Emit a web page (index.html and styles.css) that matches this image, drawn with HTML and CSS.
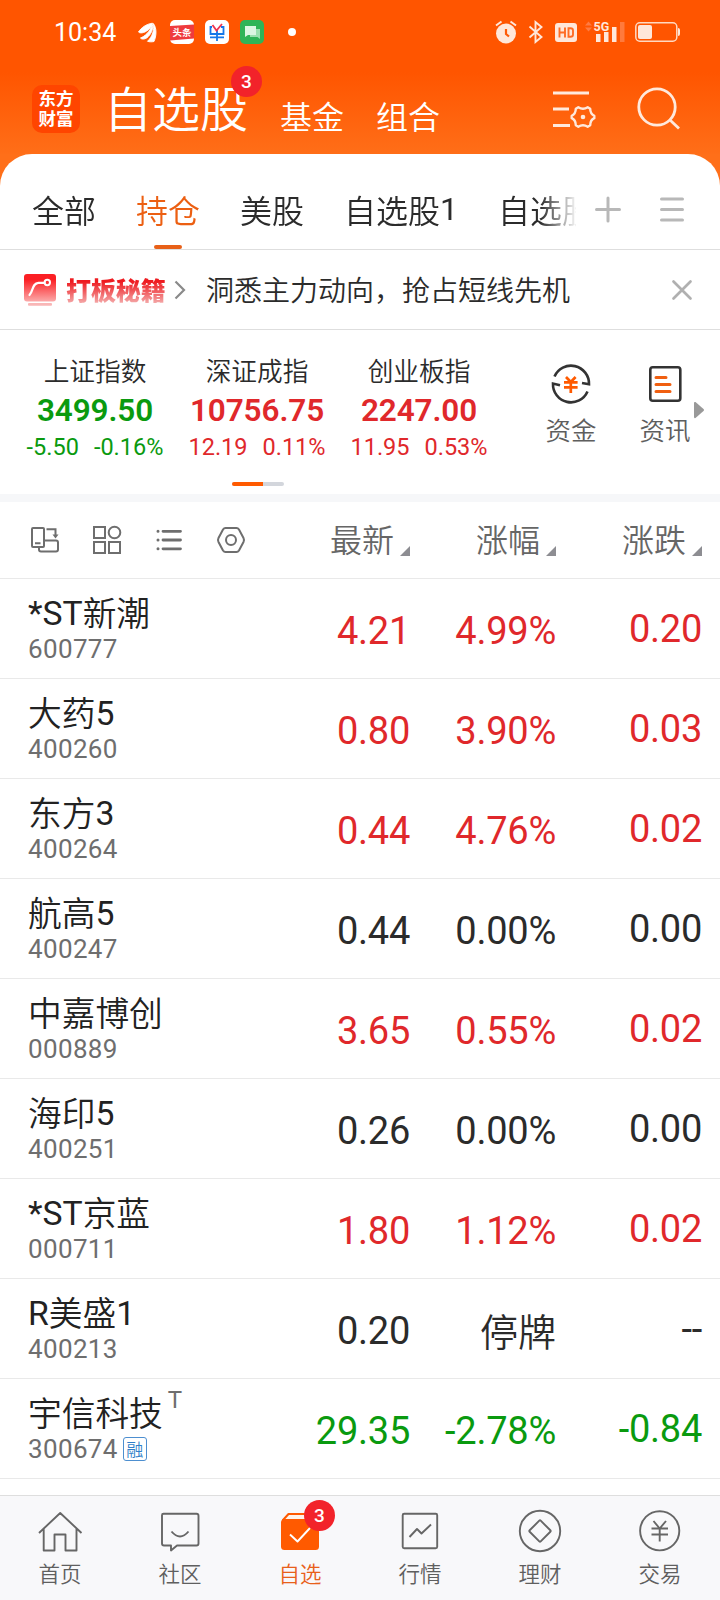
FILE: index.html
```html
<!DOCTYPE html>
<html lang="zh-CN">
<head>
<meta charset="utf-8">
<title>自选股</title>
<link rel="stylesheet" href="styles.css">
</head>
<body>
<div class="app">
  <header class="header">
    <div class="status">
      <span class="clock">10:34</span>
      <svg class="st-notes" width="176" height="28" viewBox="134 18 176 28">
        <path d="M138.500 32C141 28 146 24 152.500 23.200C151.500 27.500 148 31 143.500 32.500C141.500 33.200 139.500 33 138.500 32ZM140.500 38C144.500 36.500 150 32 152.300 24.500C153.800 29 150.500 35 147 37.800C144.500 39.500 141.500 39.500 140.500 38ZM147.500 41.300C152.500 36.500 154.500 30 153.300 23.500C157 28 156.500 36 154 41.500C152 42 149.500 42 147.500 41.300Z" fill="#fff" stroke="#fff" stroke-width=".9"/>
        <rect x="170" y="20" width="24" height="24" rx="5" fill="#fff"/>
        <path d="M170 26L194 24.500V38.500L170 40.500Z" fill="#ef3b3e"/>
        <text class="news-mark" x="182" y="36.300" text-anchor="middle">头条</text>
        <rect x="205" y="20" width="24" height="24" rx="5" fill="#fff"/>
        <path d="M212 27H210.500V34H223.500V27H221M210 37.300H224M217 30V41" fill="none" stroke="#1677e8" stroke-width="1.800"/>
        <path d="M212.500 25L216.500 30.500L222 24" fill="none" stroke="#ee3350" stroke-width="1.800"/>
        <rect x="240" y="20" width="24" height="24" rx="5" fill="#2fb457"/>
        <path d="M250 29H260V39L257.500 37H250Z" fill="#9be0ae"/>
        <path d="M245 26H256V35H248L245 37Z" fill="#dcf6e2"/>
        <circle cx="292" cy="32" r="4" fill="#fff"/>
      </svg>
      <svg class="st-system" width="190" height="28" viewBox="494 18 190 28">
        <g fill="#ffe7da">
          <circle cx="506" cy="33.500" r="10"/>
          <path d="M506 29V34L509 36.500" fill="none" stroke="#ff5a08" stroke-width="2.200"/>
          <path d="M496 25.500L501.500 21.500M510.500 21.500L516 25.500" stroke="#ffe7da" stroke-width="2"/>
          <path d="M529.500 26.500L541.500 37L535.500 42V22L541.500 27L529.500 37.500" fill="none" stroke="#ffe7da" stroke-width="1.900"/>
          <rect x="555" y="23" width="22" height="19" rx="3"/>
          <path d="M559.500 27.500V37.500M565 27.500V37.500M559.500 32.500H565M568.500 28.200V36.800H570.500Q573 36.800 573 34.500V30.500Q573 28.200 570.500 28.200Z" fill="none" stroke="#ff6c25" stroke-width="1.900"/>
          <path d="M585 25.500L588.500 21.500L592 25.500ZM585 27.500L588.500 31.500L592 27.500Z" fill="#ff7b42"/>
          <text class="net-mark" x="593.500" y="31">5G</text>
          <path d="M596 34H600.500V42H596ZM604 32H608.500V42H604ZM612 27H616.500V42H612Z"/>
          <path d="M620 22H624.500V42H620Z" fill="#ff7a3d"/>
          <rect x="635.800" y="22.800" width="41" height="18.400" rx="4" fill="none" stroke="#ffd9c2" stroke-width="1.500"/>
          <rect x="638" y="25" width="14" height="14" rx="2"/>
          <path d="M678 28Q680 28 680 30V34Q680 36 678 36Z"/>
        </g>
      </svg>
    </div>
    <div class="titlebar">
      <div class="logo"><span>东方</span><span>财富</span></div>
      <h1 class="title">自选股<span class="badge badge-title">3</span></h1>
      <span class="sub">基金</span>
      <span class="sub">组合</span>
      <svg class="ico-filter" width="44" height="42" viewBox="553 88 44 42" fill="none" stroke="#ffe9dc" stroke-width="2.800">
        <path d="M554 93H590M554 109H570M554 125.500H571"/>
        <path d="M579.300 107.300Q584 110.300 588.700 107.300L591.200 108.800Q591.300 114 595.300 115.800V118.200Q591.300 120 591.200 125.200L588.700 126.700Q584 123.700 579.300 126.700L576.800 125.200Q576.700 120 572.700 118.200V115.800Q576.700 114 576.800 108.800Z" stroke-width="2.400" stroke-linejoin="round"/>
        <circle cx="584" cy="117" r="2.300" fill="#ffe9dc" stroke="none"/>
      </svg>
      <svg class="ico-search" width="44" height="44" viewBox="638 86 44 44" fill="none" stroke="#ffe9dc" stroke-width="2.800">
        <circle cx="658" cy="107" r="18.200"/><path d="M671 120L680 128.500"/>
      </svg>
    </div>
  </header>

  <main class="sheet">
    <nav class="tabs">
      <div class="tab-list">
        <span class="tab">全部</span><span class="tab tab-on">持仓</span><span class="tab">美股</span><span class="tab">自选股<span class="num">1</span></span><span class="tab">自选股</span>
      </div>
      <svg class="ico-tabs" width="92" height="28" viewBox="594 196 92 28" stroke="#b8b8b8" stroke-width="3" stroke-linecap="round">
        <path d="M596.500 209.500H619.500M608 198V221M661.500 199H682.500M661.500 209.500H682.500M661.500 220H682.500"/>
      </svg>
    </nav>

    <section class="notice">
      <svg width="32" height="33" viewBox="24 273 32 33">
        <defs><linearGradient id="tip" x1="0" y1="0" x2="0" y2="1"><stop offset="0.2" stop-color="#fb1f24"/><stop offset="1" stop-color="#fbaaaa"/></linearGradient></defs>
        <rect x="24" y="274" width="32" height="27.500" rx="3" fill="url(#tip)"/>
        <rect x="28" y="303" width="24" height="2.700" rx="1" fill="#f9b6b6"/>
        <path d="M29.500 295C33.500 291 32 283 38.500 282.800H44.500" fill="none" stroke="#fff" stroke-width="2.200" stroke-linecap="round"/>
        <circle cx="47.300" cy="282.500" r="2.700" fill="none" stroke="#fff" stroke-width="2"/>
      </svg>
      <span class="notice-tag">打板秘籍</span>
      <svg class="ico-chev" width="12" height="20" viewBox="175 280 12 20" fill="none" stroke="#8a8a8a" stroke-width="2.200"><path d="M176.500 281.500L185 290L176.500 298.500"/></svg>
      <span class="notice-text">洞悉主力动向，抢占短线先机</span>
      <svg class="ico-close" width="22" height="22" viewBox="671.500 279 22 22" stroke="#b0b0b0" stroke-width="2.700" stroke-linecap="round"><path d="M674 281.500L691 298.500M691 281.500L674 298.500"/></svg>
    </section>

    <section class="market">
      <div class="index-list">
        <div class="index down"><span class="index-name">上证指数</span><b class="index-val">3499.50</b><span class="index-chg"><span>-5.50</span><span>-0.16%</span></span></div>
        <div class="index up"><span class="index-name">深证成指</span><b class="index-val">10756.75</b><span class="index-chg"><span>12.19</span><span>0.11%</span></span></div>
        <div class="index up"><span class="index-name">创业板指</span><b class="index-val">2247.00</b><span class="index-chg"><span>11.95</span><span>0.53%</span></span></div>
        <div class="pager"><i></i></div>
      </div>
      <div class="shortcut">
        <svg width="44" height="44" viewBox="549 362 44 44" fill="none" stroke="#333" stroke-width="2.600">
          <path d="M554.500 376.500A18 18 0 0 1 589 384.200L582 383M587.500 391.500A18 18 0 0 1 553 383.600L560 385.300"/>
          <path d="M566 377L570.800 382L575.600 377M564 382.300H577.600M564 387.300H577.600M570.800 381V393" stroke="#ff5a00" stroke-width="2.700"/>
        </svg>
        <span>资金</span>
      </div>
      <div class="shortcut">
        <svg width="44" height="44" viewBox="643 362 44 44" fill="none" stroke="#333" stroke-width="2.600">
          <rect x="650.300" y="367.300" width="30" height="33.500" rx="2.500"/>
          <path d="M656 377.500H666M656 384.500H670M656 391.500H670" stroke="#f05f10" stroke-width="3" stroke-linecap="round"/>
        </svg>
        <span>资讯</span>
      </div>
      <svg class="ico-more" width="10" height="18" viewBox="0 0 10 18"><path d="M0 2Q0 .5 1.500 1L9.500 8Q10.500 9 9.500 10L1.500 17Q0 17.500 0 16Z" fill="#999"/></svg>
    </section>

    <section class="table">
      <div class="thead">
        <svg class="tools" width="216" height="30" viewBox="30 525 216 30" fill="none" stroke="#6e6e6e" stroke-width="2">
          <rect x="32" y="528" width="12" height="19" rx="1"/><path d="M35 543.300H40.500M46.500 529.300H55.500V536M44.500 540.500H56Q58 540.500 58 542.500V549.500Q58 551.500 56 551.500H41Q39 551.500 39 549.500V547"/><path d="M52.500 534.500H58.500L55.500 538.500Z" fill="#6e6e6e" stroke="none"/>
          <rect x="94" y="527" width="11" height="11"/><circle cx="114.500" cy="532.500" r="5.800"/><rect x="94" y="542" width="11" height="11"/><rect x="109" y="542" width="11" height="11"/>
          <path d="M163 531.300H180.500M163 540H180.500M163 548.800H180.500" stroke-width="2.800" stroke-linecap="round"/>
          <path d="M158 531.300H158.010M158 540H158.010M158 548.800H158.010" stroke-width="3" stroke-linecap="round"/>
          <path d="M225.500 528H236.500Q238 528 239 529.500L243.500 538Q244.500 540 243.500 542L239 550.500Q238 552 236.500 552H225.500Q224 552 223 550.500L218.500 542Q217.500 540 218.500 538L223 529.500Q224 528 225.500 528Z"/><circle cx="231" cy="540" r="5"/>
        </svg>
        <span class="col">最新<i class="sort"></i></span><span class="col">涨幅<i class="sort"></i></span><span class="col">涨跌<i class="sort"></i></span>
      </div>
      <div class="row up"><div class="stock"><div class="name"><span class="num">*ST</span>新潮</div><div class="code">600777</div></div><span class="price">4.21</span><span class="pct">4.99%</span><span class="chg">0.20</span></div>
      <div class="row up"><div class="stock"><div class="name">大药<span class="num">5</span></div><div class="code">400260</div></div><span class="price">0.80</span><span class="pct">3.90%</span><span class="chg">0.03</span></div>
      <div class="row up"><div class="stock"><div class="name">东方<span class="num">3</span></div><div class="code">400264</div></div><span class="price">0.44</span><span class="pct">4.76%</span><span class="chg">0.02</span></div>
      <div class="row"><div class="stock"><div class="name">航高<span class="num">5</span></div><div class="code">400247</div></div><span class="price">0.44</span><span class="pct">0.00%</span><span class="chg">0.00</span></div>
      <div class="row up"><div class="stock"><div class="name">中嘉博创</div><div class="code">000889</div></div><span class="price">3.65</span><span class="pct">0.55%</span><span class="chg">0.02</span></div>
      <div class="row"><div class="stock"><div class="name">海印<span class="num">5</span></div><div class="code">400251</div></div><span class="price">0.26</span><span class="pct">0.00%</span><span class="chg">0.00</span></div>
      <div class="row up"><div class="stock"><div class="name"><span class="num">*ST</span>京蓝</div><div class="code">000711</div></div><span class="price">1.80</span><span class="pct">1.12%</span><span class="chg">0.02</span></div>
      <div class="row"><div class="stock"><div class="name"><span class="num">R</span>美盛<span class="num">1</span></div><div class="code">400213</div></div><span class="price">0.20</span><span class="pct halted">停牌</span><span class="chg">--</span></div>
      <div class="row down"><div class="stock"><div class="name">宇信科技<span class="flag-t">T</span></div><div class="code">300674<span class="flag-m">融</span></div></div><span class="price">29.35</span><span class="pct">-2.78%</span><span class="chg">-0.84</span></div>
    </section>
  </main>

  <nav class="bottom">
    <div class="item">
      <svg width="46" height="46" viewBox="37 1508 46 46"><path d="M39 1533L60.200 1513L81.500 1533M43.700 1529V1550.500H54.500V1534.500H65.500V1550.500H76.500V1529"/></svg>
      <span>首页</span>
    </div>
    <div class="item">
      <svg width="46" height="46" viewBox="157 1508 46 46"><path d="M163.500 1513.700H196.500Q198.500 1513.700 198.500 1515.700V1543.500Q198.500 1545.500 196.500 1545.500H177L171 1550.500V1545.500H164Q162 1545.500 162 1543.500V1515.200Q162 1513.700 163.500 1513.700ZM171.500 1531.500Q180 1541.500 188.500 1531.500"/></svg>
      <span>社区</span>
    </div>
    <div class="item item-on">
      <svg width="46" height="46" viewBox="277 1508 46 46"><path d="M283 1520L288.500 1514H312L318 1520Z" fill="#fff3ea" stroke="#ff5a00" stroke-width="2"/><rect x="281" y="1519" width="38" height="31" rx="3.500" fill="#ff5a00" stroke="none"/><path d="M290 1534.500L297.500 1541.500L310 1528" stroke="#fff" stroke-width="1.900"/></svg>
      <span>自选</span><b class="badge badge-nav">3</b>
    </div>
    <div class="item">
      <svg width="46" height="46" viewBox="397 1508 46 46"><rect x="402.700" y="1513.700" width="34.500" height="34.500" rx="1.500"/><path d="M409.500 1537L417 1529L421.500 1533.500L431 1524.500"/></svg>
      <span>行情</span>
    </div>
    <div class="item">
      <svg width="46" height="46" viewBox="517 1508 46 46"><circle cx="540" cy="1531" r="20.200"/><rect x="532.200" y="1523.200" width="15.600" height="15.600" rx="1" transform="rotate(45 540 1531)"/></svg>
      <span>理财</span>
    </div>
    <div class="item">
      <svg width="46" height="46" viewBox="637 1508 46 46"><circle cx="659.700" cy="1530.800" r="19.600"/><path d="M653.500 1521L659.700 1528.500L666 1521M651.500 1528.500H668M651.500 1534.500H668M659.700 1528.500V1541.500"/></svg>
      <span>交易</span>
    </div>
  </nav>
</div>
</body>
</html>
```

FILE: styles.css
```css
* { box-sizing: border-box; }
body { margin: 0; font-family: "Noto Sans CJK SC", sans-serif; font-weight: 350; color: #2b2b2b; }
svg { display: block; flex: none; }
i { font-style: normal; }
.app { width: 720px; height: 1600px; display: flex; flex-direction: column; overflow: hidden; background: #ff6f19; }
.num { font-family: Roboto, sans-serif; font-weight: 400; }

/* header */
.header { flex: none; height: 154px; background: linear-gradient(#ff5500 0, #ff5500 72px, #ff6e18 154px); color: #fff; }
.status { height: 64px; display: flex; align-items: center; padding: 0 36px 0 54px; }
.clock { width: 80px; font: 400 25px/30px Roboto, sans-serif; padding-top: 2px; }
.st-system { margin-left: auto; }
.news-mark { font: 700 9.500px "Noto Sans CJK SC", sans-serif; fill: #fff; }
.net-mark { font: 700 12.500px Roboto, sans-serif; fill: #ffe7da; }
.titlebar { display: flex; height: 90px; padding-left: 32px; align-items: flex-start; }
.logo { width: 48px; height: 48px; margin-top: 21px; border-radius: 10px; background: #ff4500; display: flex; flex-direction: column; align-items: center; justify-content: center; font-weight: 700; font-size: 17.500px; line-height: 20px; padding-bottom: 2px; }
.title { position: relative; margin: 17px 0 0 26px; width: 142px; font-size: 48px; line-height: 50px; font-weight: 350; white-space: nowrap; text-indent: -2px; }
.badge { position: absolute; width: 31px; height: 31px; border-radius: 50%; background: #f2232a; color: #fff; text-align: center; text-indent: 0; font: 500 19px/31px Roboto, sans-serif; }
.badge-title { left: 125px; top: -15px; }
.sub { margin: 34px 0 0 32px; font-size: 32px; line-height: 34px; }
.ico-filter { margin: 24px 0 0 112px; }
.ico-search { margin: 22px 0 0 41px; }

/* tabs */
.sheet { flex: 1; background: #fff; border-radius: 32px 32px 0 0; overflow: hidden; }
.tabs { height: 96px; border-bottom: 1px solid #dedede; display: flex; padding: 0 34px 0 32px; }
.tab-list { width: 544px; overflow: hidden; display: flex; gap: 40px; -webkit-mask-image: linear-gradient(90deg, #000 508px, transparent 546px); mask-image: linear-gradient(90deg, #000 508px, transparent 546px); }
.tab { flex: none; font-size: 32px; line-height: 34px; padding-top: 38px; display: flex; color: #2b2b2b; }
.tab-on { color: #ec5f12; position: relative; }
.tab-on::after { content: ""; position: absolute; left: 18px; bottom: 0; width: 28px; height: 4px; border-radius: 2px; background: #e86018; }
.ico-tabs { margin: 42px 0 0 18px; }

/* notice */
.notice { height: 80px; border-bottom: 1px solid #dedede; display: flex; align-items: center; padding: 0 27px 0 24px; }
.notice-tag { width: 101px; margin: 0 0 2px 10px; font-size: 25px; line-height: 30px; font-weight: 900; letter-spacing: -.1px; background: linear-gradient(#ee1b20 25%, #f4a4a4 95%); -webkit-background-clip: text; background-clip: text; color: transparent; }
.ico-chev { margin-left: 7px; }
.notice-text { margin: 0 0 1px 20px; font-size: 28px; line-height: 30px; }
.ico-close { margin-left: auto; }

/* market */
.market { position: relative; height: 172px; border-bottom: 8px solid #f6f7f9; padding-left: 14px; display: flex; }
.index-list { width: 510px; display: grid; grid-template-columns: 162px 162px 162px; grid-template-rows: 152px auto; }
.index { display: flex; flex-direction: column; align-items: center; padding-top: 24px; }
.index-name { font-size: 25.700px; line-height: 32px; color: #2b2b2b; }
.index-val { font: 600 31.500px/38px Roboto, sans-serif; letter-spacing: -.1px; margin-top: 6px; }
.index-chg { display: flex; gap: 15px; font: 400 23.500px/30px Roboto, sans-serif; margin-top: 2px; }
.pager { grid-column: 1 / -1; justify-self: center; width: 52px; height: 4px; margin-left: 2px; border-radius: 2px; background: #d3d6dc; overflow: hidden; display: flex; }
.pager i { width: 31px; background: #ff5a00; }
.shortcut { width: 94px; padding-top: 32px; display: flex; flex-direction: column; align-items: center; font-size: 25.500px; line-height: 30px; color: #5e5e5e; gap: 8px; }
.ico-more { position: absolute; left: 694px; top: 71px; }
.up { color: #e0282b; }
.down { color: #0a9a0f; }

/* table */
.thead { height: 77px; border-bottom: 1px solid #e9e9e9; padding: 0 18px 0 30px; display: grid; grid-template-columns: 1fr 146px 146px 146px; }
.tools { margin-top: 23px; }
.col { display: flex; justify-content: flex-end; align-items: flex-start; font-size: 32px; line-height: 34px; color: #666; padding-top: 19px; }
.sort { margin: 25px 0 0 6px; border-left: 10px solid transparent; border-bottom: 10px solid #8d8d92; }
.row { height: 100px; border-bottom: 1px solid #e9e9e9; padding: 0 18px 0 28px; display: grid; grid-template-columns: 1fr 114px 146px 146px; }
.name { display: flex; font-size: 33.700px; line-height: 36px; padding-top: 15px; color: #222; }
.name .num { padding-top: 2px; margin-bottom: -2px; }
.code { display: flex; align-items: center; font: 400 26px/30px Roboto, sans-serif; letter-spacing: .35px; color: #6e6e6e; padding-top: 4px; }
.price, .pct, .chg { font: 400 38px/46px Roboto, sans-serif; letter-spacing: -.25px; text-align: right; padding-top: 29px; white-space: nowrap; }
.chg { padding-top: 27px; }
.pct.halted { font-family: "Noto Sans CJK SC", sans-serif; font-weight: 350; padding-top: 28px; letter-spacing: 0; }
.flag-t { font: 400 24px/24px Roboto, sans-serif; color: #6e6e6e; margin: -6px 0 0 5px; }
.flag-m { width: 24px; height: 24px; margin-left: 5px; border: 1px solid #4d8fd0; border-radius: 3px; font: 350 17px/21px "Noto Sans CJK SC", sans-serif; letter-spacing: 0; text-align: center; color: #2f7fc9; }

/* bottom navigation */
.bottom { flex: none; height: 105px; border-top: 1px solid #dedede; background: #f8f8fa; display: grid; grid-template-columns: repeat(6, 120px); }
.item { position: relative; display: flex; flex-direction: column; align-items: center; padding-top: 12px; font-size: 21.500px; line-height: 26px; color: #5f5f5f; gap: 6px; }
.item svg { fill: none; stroke: #666; stroke-width: 1.900; stroke-linejoin: round; }
.item-on { color: #e8601a; }
.badge-nav { left: 64px; top: 4px; }
```
